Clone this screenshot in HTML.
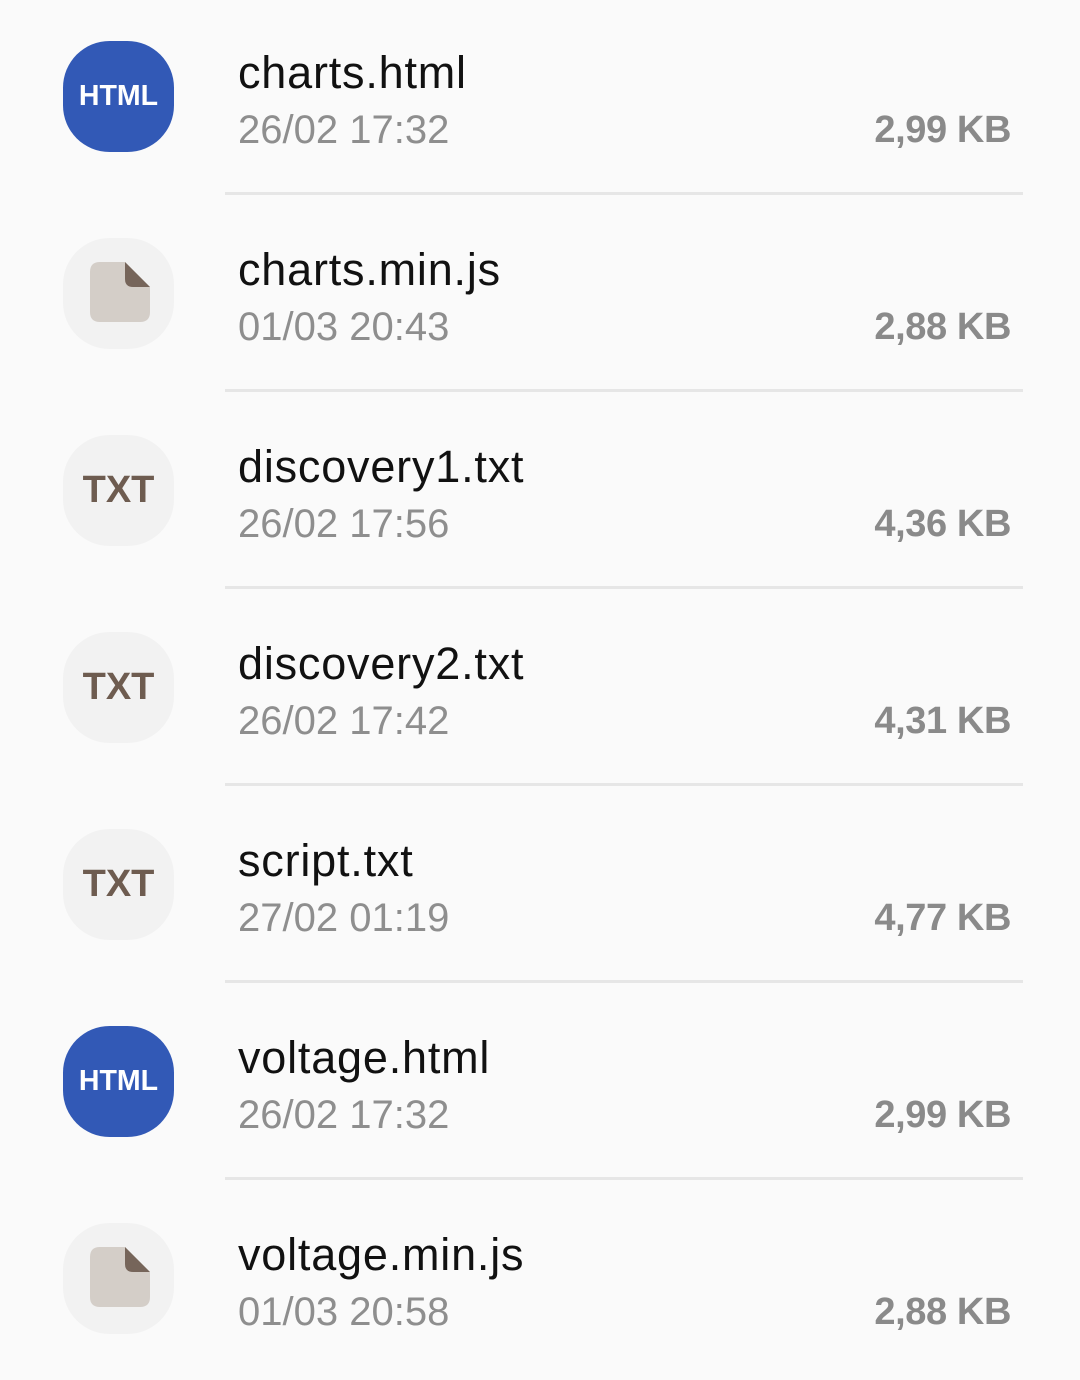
<!DOCTYPE html>
<html><head><meta charset="utf-8"><style>
html,body{margin:0;padding:0;background:#fafafa;width:1080px;height:1380px;overflow:hidden;font-family:"Liberation Sans",Arial,sans-serif;}
.row{position:absolute;left:0;width:1080px;height:197px;}
.icon{position:absolute;left:63px;top:41px;width:111px;height:111px;border-radius:42%;background:#f2f2f2;display:flex;align-items:center;justify-content:center;}
.icon.html{background:#3259b6;color:#fff;font-weight:bold;font-size:28.5px;}
.icon.txt{color:#6e5c50;font-weight:bold;font-size:38px;}
.icon svg{position:absolute;left:27px;top:24px;}
.t{position:absolute;left:238px;top:47px;font-size:45px;letter-spacing:0.8px;color:#111;line-height:52px;white-space:nowrap;}
.d{position:absolute;left:238px;top:107px;font-size:40px;color:#8e8e8e;line-height:46px;white-space:nowrap;}
.s{position:absolute;right:69px;top:107px;font-size:38px;color:#8a8a8a;line-height:46px;font-weight:bold;letter-spacing:-0.4px;white-space:nowrap;}
.div{position:absolute;left:225px;top:192px;width:798px;height:3px;background:#e6e6e6;}
</style></head><body>

<div class="row" style="top:0">
<div class="icon html">HTML</div>
<div class="t">charts.html</div><div class="d">26/02 17:32</div><div class="s">2,99 KB</div><div class="div"></div></div>

<div class="row" style="top:197px">
<div class="icon"><svg width="60" height="60" viewBox="0 0 60 60"><path d="M10 0H35L60 25V50Q60 60 50 60H10Q0 60 0 50V10Q0 0 10 0Z" fill="#d4cec8"/><path d="M35 0L60 25H43Q35 25 35 17Z" fill="#76655a"/></svg></div>
<div class="t">charts.min.js</div><div class="d">01/03 20:43</div><div class="s">2,88 KB</div><div class="div"></div></div>

<div class="row" style="top:394px">
<div class="icon txt">TXT</div>
<div class="t">discovery1.txt</div><div class="d">26/02 17:56</div><div class="s">4,36 KB</div><div class="div"></div></div>

<div class="row" style="top:591px">
<div class="icon txt">TXT</div>
<div class="t">discovery2.txt</div><div class="d">26/02 17:42</div><div class="s">4,31 KB</div><div class="div"></div></div>

<div class="row" style="top:788px">
<div class="icon txt">TXT</div>
<div class="t">script.txt</div><div class="d">27/02 01:19</div><div class="s">4,77 KB</div><div class="div"></div></div>

<div class="row" style="top:985px">
<div class="icon html">HTML</div>
<div class="t">voltage.html</div><div class="d">26/02 17:32</div><div class="s">2,99 KB</div><div class="div"></div></div>

<div class="row" style="top:1182px">
<div class="icon"><svg width="60" height="60" viewBox="0 0 60 60"><path d="M10 0H35L60 25V50Q60 60 50 60H10Q0 60 0 50V10Q0 0 10 0Z" fill="#d4cec8"/><path d="M35 0L60 25H43Q35 25 35 17Z" fill="#76655a"/></svg></div>
<div class="t">voltage.min.js</div><div class="d">01/03 20:58</div><div class="s">2,88 KB</div></div>

</body></html>
